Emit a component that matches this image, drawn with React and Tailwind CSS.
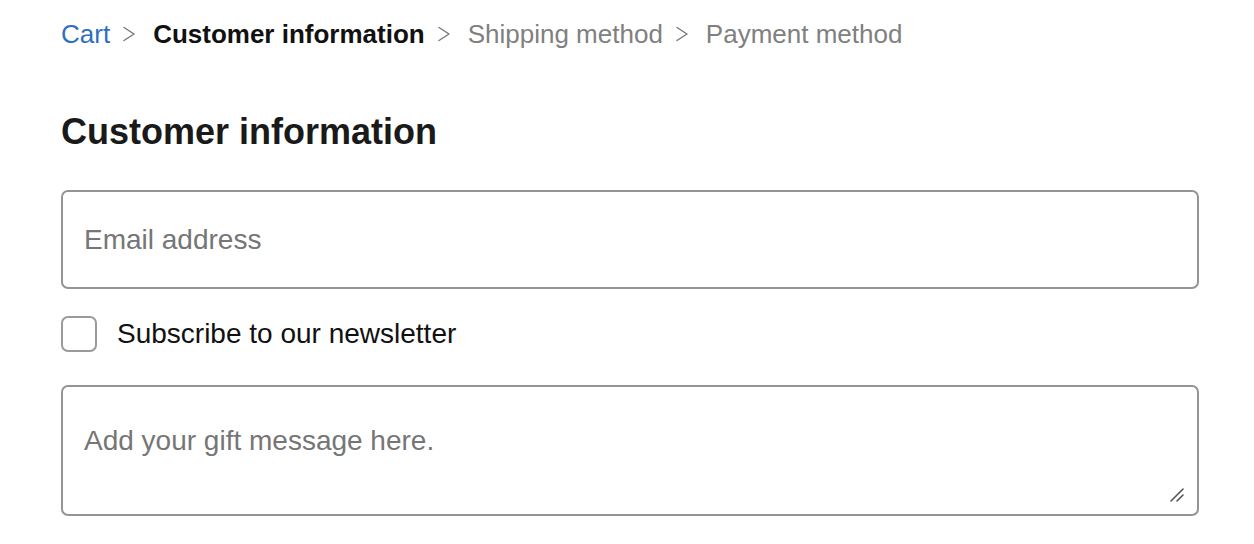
import React from "react";

function Chevron() {
  return (
    <svg width="12" height="16" viewBox="0 0 12 16" className="ml-[13px] mr-[18px] shrink-0">
      <path d="M1 1.5 L11 8 L1 14.5" fill="none" stroke="#777" strokeWidth="1.4" strokeLinecap="round" strokeLinejoin="round" />
    </svg>
  );
}

export default function App() {
  return (
    <div className="w-[1254px] h-[544px] bg-white pl-[61px] pr-[55px] pt-[18px]" style={{ fontFamily: '"Liberation Sans", Arial, sans-serif' }}>
      <nav className="flex items-center h-[32px] text-[26px] leading-[32px]">
        <span className="text-[#2f6fbf]">Cart</span>
        <Chevron />
        <span className="font-bold text-[#111]">Customer information</span>
        <Chevron />
        <span className="text-[#808080]">Shipping method</span>
        <Chevron />
        <span className="text-[#808080]">Payment method</span>
      </nav>
      <h1 className="mt-[62px] text-[36px] leading-[40px] font-bold text-[#1a1a1a]">Customer information</h1>
      <div className="mt-[38px] flex flex-col">
        <div className="h-[99px] rounded-[7px] border-2 border-[#949494] flex items-center px-[21px] text-[28px] text-[#767676]">
          Email address
        </div>
        <label className="mt-[27px] flex items-center h-[36px]">
          <span className="w-[36px] h-[36px] rounded-[7px] border-2 border-[#9a9a9a] shrink-0" />
          <span className="ml-[20px] text-[28px] text-[#111]">Subscribe to our newsletter</span>
        </label>
        <div className="mt-[33px] relative h-[131px] rounded-[7px] border-2 border-[#949494] px-[21px] pt-[39px] text-[28px] leading-[30px] text-[#767676]">
          Add your gift message here.
          <svg width="14" height="14" viewBox="0 0 14 14" className="absolute right-[13px] bottom-[12px]">
            <path d="M1 13 L13 1 M7 13 L13 7" stroke="#555" strokeWidth="1.6" strokeLinecap="round" />
          </svg>
        </div>
      </div>
    </div>
  );
}
